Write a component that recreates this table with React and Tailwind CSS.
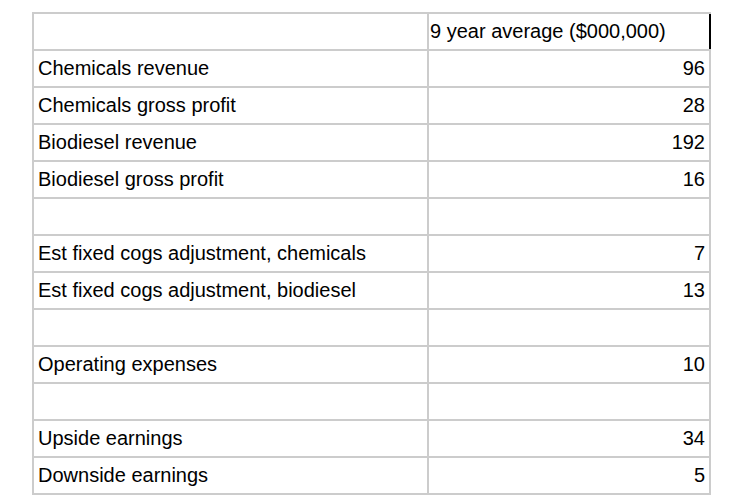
import { Fragment } from "react";

export default function App() {
  const rows = [
    ["Chemicals revenue", "96"],
    ["Chemicals gross profit", "28"],
    ["Biodiesel revenue", "192"],
    ["Biodiesel gross profit", "16"],
    ["", ""],
    ["Est fixed cogs adjustment, chemicals", "7"],
    ["Est fixed cogs adjustment, biodiesel", "13"],
    ["", ""],
    ["Operating expenses", "10"],
    ["", ""],
    ["Upside earnings", "34"],
    ["Downside earnings", "5"],
  ];
  return (
    <div className="w-[748px] h-[499px] bg-white pt-3 pl-8 overflow-hidden" style={{ fontFamily: '"Liberation Sans", Arial, sans-serif' }}>
      <div className="inline-grid grid-cols-[393px_280px] auto-rows-[35px] gap-[2px] p-[2px] bg-[#cccccc] text-[20px] leading-[23px] text-black">
        <div className="bg-white"></div>
        <div className="bg-white flex items-center pl-[1px] shadow-[2px_0_0_0_#000]">9 year average ($000,000)</div>
        {rows.map(([label, val], i) => (
          <Fragment key={i}>
            <div className="bg-white flex items-center pl-[4px]">{label}</div>
            <div className="bg-white flex items-center justify-end pr-[4px]">{val}</div>
          </Fragment>
        ))}
      </div>
    </div>
  );
}
